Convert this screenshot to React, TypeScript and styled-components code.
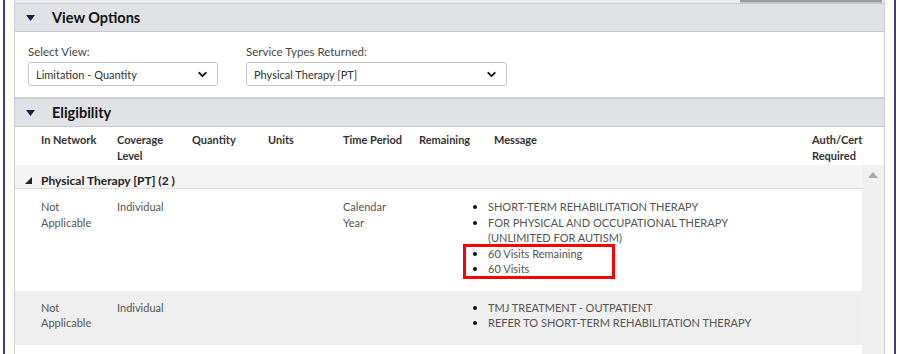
import React from 'react';
import styled, { createGlobalStyle } from 'styled-components';
import { ChevronDown } from 'lucide-react';

const GlobalStyle = createGlobalStyle`
    html, body {
        margin: 0;
        padding: 0;
        background: #ffffff;
        font-family: Lato, "Noto Sans", Arial, sans-serif;
        overflow: hidden;
    }
`;

const Frame = styled.div`
    margin-left: 3px;
    width: 893px;
    height: 354px;
    border-left: 2px solid #3b3b8e;
    border-right: 2px solid #3b3b8e;
    padding: 0 9px;
    box-sizing: border-box;
`;

const Panel = styled.div`
    height: 354px;
    border-left: 1px solid #cfcfd3;
    border-right: 1px solid #cfcfd3;
    display: flex;
    flex-direction: column;
    overflow: hidden;
`;

const TopStrip = styled.div`
    height: 3px;
    background: #ececee;
    display: flex;
    justify-content: flex-end;
`;

const TabEdge = styled.div`
    width: 142px;
    height: 2px;
    margin-right: 2px;
    background: #9c9c9c;
    border-bottom: 1px solid #c4c4c4;
`;

const SectionHeader = styled.div`
    height: 27px;
    background: #e1e2e6;
    border-top: 1px solid #c9c9cd;
    border-bottom: 1px solid #c9c9cd;
    display: flex;
    align-items: center;
    padding-left: 11px;
    gap: 17px;
    font-size: 14.5px;
    font-weight: 700;
    color: #111111;
`;

const CaretDown = () => (
    <svg width="9" height="6" viewBox="0 0 9 6">
        <polygon points="0,0 9,0 4.5,6" fill="#1d1d4f" />
    </svg>
);

const OptionsBody = styled.div`
    height: 66px;
    display: flex;
    gap: 28px;
    padding: 13px 0 0 13px;
    box-sizing: border-box;
    border-bottom: 1px solid #d5d5d8;
`;

const Field = styled.div<{ width: number }>`
    display: flex;
    flex-direction: column;
    gap: 3px;
    width: ${p => p.width}px;
`;

const FieldLabel = styled.label`
    font-size: 11.5px;
    color: #444444;
    line-height: 14px;
`;

const SelectBox = styled.div`
    height: 22px;
    border: 1px solid #c8c8cc;
    border-radius: 3px;
    display: flex;
    align-items: center;
    justify-content: space-between;
    padding: 0 8px 0 7px;
    font-size: 11px;
    color: #333333;
    background: #ffffff;
`;

const Columns = styled.div`
    display: grid;
    grid-template-columns: 76px 75px 76px 75px 76px 75px 318px 1fr;
    padding-left: 26px;
`;

const HeadRow = styled(Columns)`
    padding-top: 5px;
    padding-bottom: 1px;
    font-size: 11px;
    font-weight: 700;
    color: #333333;
    line-height: 16px;
`;

const Body = styled.div`
    flex: 1;
    display: flex;
    min-height: 0;
`;

const Rows = styled.div`
    flex: 1;
    display: flex;
    flex-direction: column;
`;

const GroupRow = styled.div`
    height: 24px;
    box-sizing: border-box;
    background: #f4f4f5;
    border-bottom: 1px solid #dedee0;
    display: flex;
    align-items: flex-end;
    gap: 9px;
    padding: 0 0 0 10px;
    font-size: 12px;
    line-height: 14px;
    font-weight: 700;
    color: #222222;

    svg {
        margin-bottom: 4px;
    }
`;

const Corner = () => (
    <svg width="7" height="7" viewBox="0 0 7 7">
        <polygon points="7,0 7,7 0,7" fill="#222222" />
    </svg>
);

const DataRow = styled(Columns)<{ shaded?: boolean }>`
    position: relative;
    padding-top: ${p => (p.shaded ? 9 : 10)}px;
    padding-bottom: 14px;
    background: ${p => (p.shaded ? '#efefef' : '#ffffff')};
    font-size: 11px;
    color: #555555;
    line-height: 15.5px;
`;

const Cell = styled.div``;

const MessageCell = styled.div`
    padding-right: 60px;
`;

const MessageList = styled.ul`
    margin: 0 0 0 -6px;
    padding: 0;
    list-style: disc outside;

    li::marker {
        color: #111111;
        font-size: 12px;
    }
`;

const Highlight = styled.div`
    position: absolute;
    left: 448px;
    top: 55px;
    width: 152px;
    height: 35px;
    border: 3px solid #ff0000;
    box-sizing: border-box;
`;

const ScrollTrack = styled.div`
    width: 22px;
    background: #f0f0f0;
    display: flex;
    justify-content: center;
    padding-top: 7px;
`;

const ArrowUp = () => (
    <svg width="10" height="6" viewBox="0 0 10 6">
        <polygon points="0,6 10,6 5,0" fill="#a8a8a8" />
    </svg>
);

const headers = [
    ['In Network'],
    ['Coverage', 'Level'],
    ['Quantity'],
    ['Units'],
    ['Time Period'],
    ['Remaining'],
    ['Message'],
    ['Auth/Cert', 'Required'],
];

type Row = {
    network: string[];
    level: string;
    period: string[];
    messages: string[];
    shaded?: boolean;
    highlight?: boolean;
};

const rows: Row[] = [
    {
        network: ['Not', 'Applicable'],
        level: 'Individual',
        period: ['Calendar', 'Year'],
        messages: [
            'SHORT-TERM REHABILITATION THERAPY',
            'FOR PHYSICAL AND OCCUPATIONAL THERAPY (UNLIMITED FOR AUTISM)',
            '60 Visits Remaining',
            '60 Visits',
        ],
        highlight: true,
    },
    {
        network: ['Not', 'Applicable'],
        level: 'Individual',
        period: [],
        messages: ['TMJ TREATMENT - OUTPATIENT', 'REFER TO SHORT-TERM REHABILITATION THERAPY'],
        shaded: true,
    },
];

const Lines = ({ lines }: { lines: string[] }) => (
    <Cell>
        {lines.map(l => (
            <div key={l}>{l}</div>
        ))}
    </Cell>
);

export default function App() {
    return (
        <>
            <GlobalStyle />
            <Frame>
                <Panel>
                    <TopStrip>
                        <TabEdge />
                    </TopStrip>
                    <SectionHeader>
                        <CaretDown />
                        <span>View Options</span>
                    </SectionHeader>
                    <OptionsBody>
                        <Field width={190}>
                            <FieldLabel>Select View:</FieldLabel>
                            <SelectBox>
                                <span>Limitation - Quantity</span>
                                <ChevronDown size={13} strokeWidth={3.5} color="#111" />
                            </SelectBox>
                        </Field>
                        <Field width={261}>
                            <FieldLabel>Service Types Returned:</FieldLabel>
                            <SelectBox>
                                <span>Physical Therapy [PT]</span>
                                <ChevronDown size={13} strokeWidth={3.5} color="#111" />
                            </SelectBox>
                        </Field>
                    </OptionsBody>
                    <SectionHeader>
                        <CaretDown />
                        <span>Eligibility</span>
                    </SectionHeader>
                    <HeadRow>
                        {headers.map(h => (
                            <Lines key={h[0]} lines={h} />
                        ))}
                    </HeadRow>
                    <Body>
                        <Rows>
                            <GroupRow>
                                <Corner />
                                <span>Physical Therapy [PT] (2 )</span>
                            </GroupRow>
                            {rows.map((r, i) => (
                                <DataRow key={i} shaded={r.shaded}>
                                    <Lines lines={r.network} />
                                    <Cell>{r.level}</Cell>
                                    <Cell />
                                    <Cell />
                                    <Lines lines={r.period} />
                                    <Cell />
                                    <MessageCell>
                                        <MessageList>
                                            {r.messages.map(m => (
                                                <li key={m}>{m}</li>
                                            ))}
                                        </MessageList>
                                    </MessageCell>
                                    <Cell />
                                    {r.highlight && <Highlight />}
                                </DataRow>
                            ))}
                        </Rows>
                        <ScrollTrack>
                            <ArrowUp />
                        </ScrollTrack>
                    </Body>
                </Panel>
            </Frame>
        </>
    );
}
